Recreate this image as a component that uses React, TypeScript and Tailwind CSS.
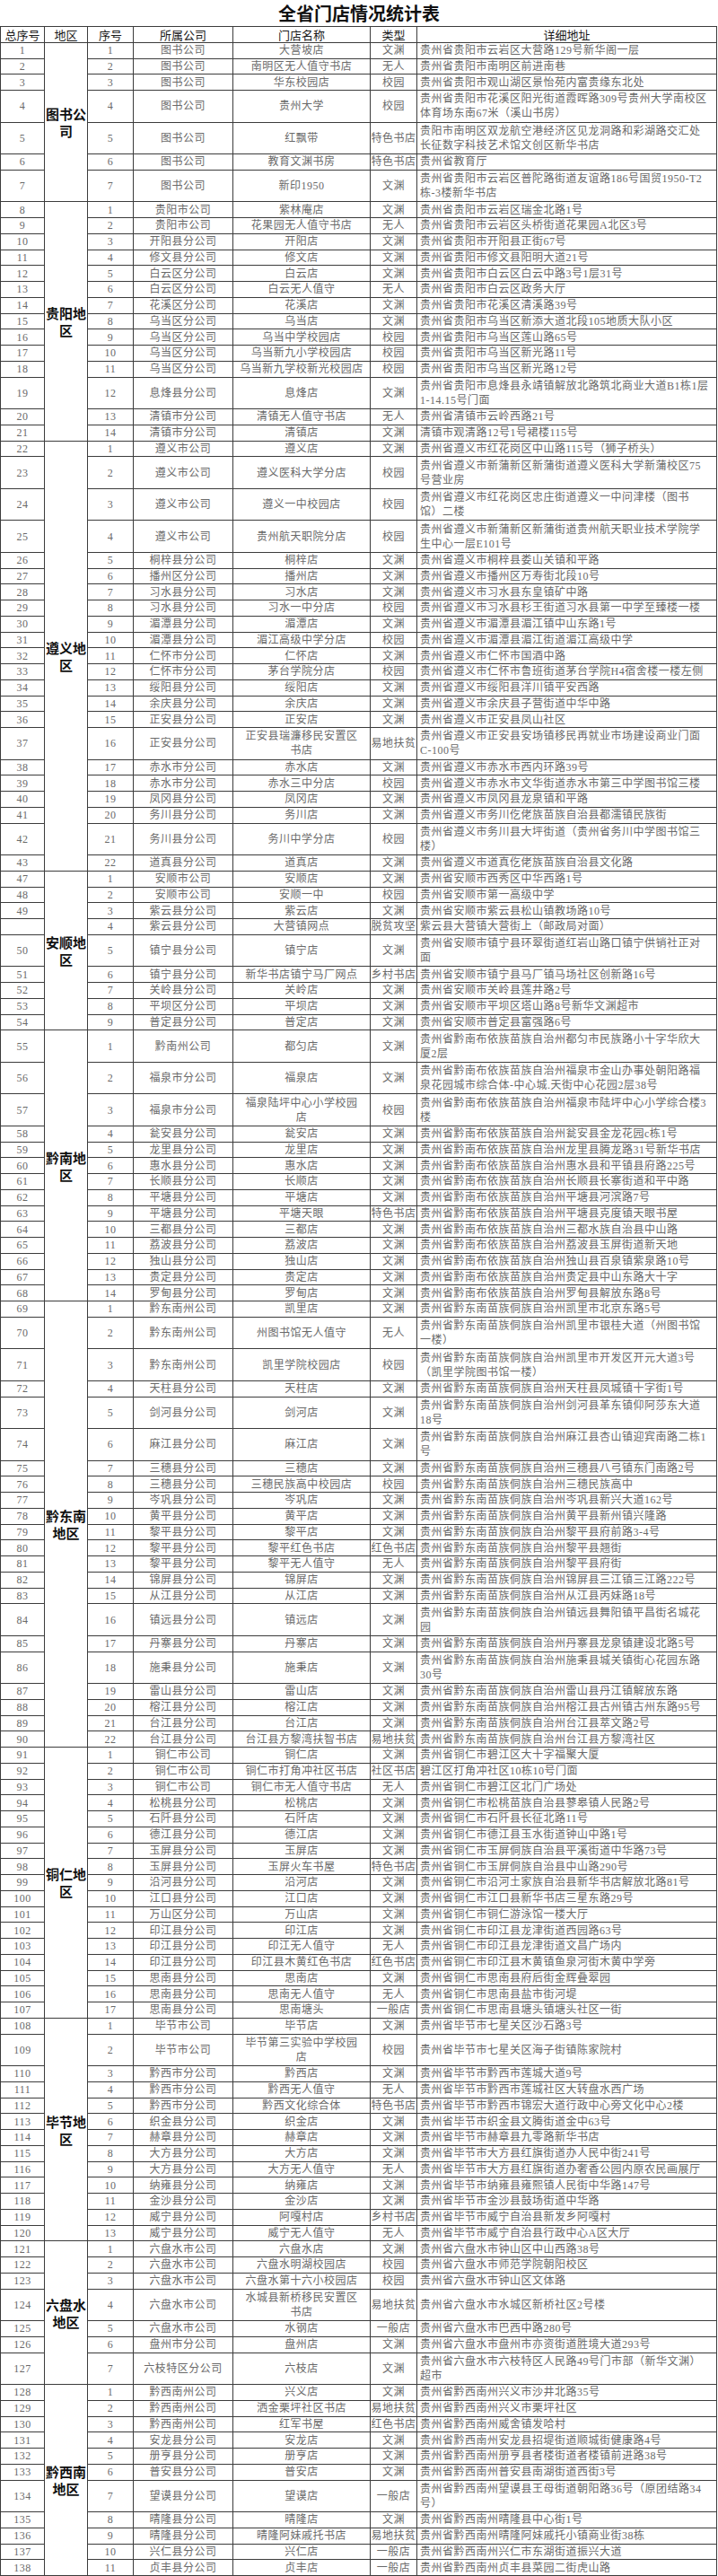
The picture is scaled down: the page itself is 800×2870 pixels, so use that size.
type Row = [string, string, string, string, string, string];

interface Region {
    name: string;
    rows: Row[];
}

const regions: Region[] = [
    {
        name: '图书公司',
        rows: [
            ['1', '1', '图书公司', '大营坡店', '文渊', '贵州省贵阳市云岩区大营路129号新华阁一层'],
            ['2', '2', '图书公司', '南明区无人值守书店', '无人', '贵州省贵阳市南明区前进南巷'],
            ['3', '3', '图书公司', '华东校园店', '校园', '贵州省贵阳市观山湖区景怡苑内富贵缘东北处'],
            ['4', '4', '图书公司', '贵州大学', '校园', '贵州省贵阳市花溪区阳光街道霞晖路309号贵州大学南校区\n体育场东南67米（溪山书房）'],
            ['5', '5', '图书公司', '红飘带', '特色书店', '贵阳市南明区双龙航空港经济区见龙洞路和彩湖路交汇处\n长征数字科技艺术馆文创区新华书店'],
            ['6', '6', '图书公司', '教育文渊书房', '特色书店', '贵州省教育厅'],
            ['7', '7', '图书公司', '新印1950', '文渊', '贵州省贵阳市云岩区普陀路街道友谊路186号国贸1950-T2\n栋-3楼新华书店'],
        ],
    },
    {
        name: '贵阳地区',
        rows: [
            ['8', '1', '贵阳市公司', '紫林庵店', '文渊', '贵州省贵阳市云岩区瑞金北路1号'],
            ['9', '2', '贵阳市公司', '花果园无人值守书店', '无人', '贵州省贵阳市云岩区头桥街道花果园A北区3号'],
            ['10', '3', '开阳县分公司', '开阳店', '文渊', '贵州省贵阳市开阳县正街67号'],
            ['11', '4', '修文县分公司', '修文店', '文渊', '贵州省贵阳市修文县阳明大道21号'],
            ['12', '5', '白云区分公司', '白云店', '文渊', '贵州省贵阳市白云区白云中路3号1层31号'],
            ['13', '6', '白云区分公司', '白云无人值守', '无人', '贵州省贵阳市白云区政务大厅'],
            ['14', '7', '花溪区分公司', '花溪店', '文渊', '贵州省贵阳市花溪区清溪路39号'],
            ['15', '8', '乌当区分公司', '乌当店', '文渊', '贵州省贵阳市乌当区新添大道北段105地质大队小区'],
            ['16', '9', '乌当区分公司', '乌当中学校园店', '校园', '贵州省贵阳市乌当区莲山路65号'],
            ['17', '10', '乌当区分公司', '乌当新九小学校园店', '校园', '贵州省贵阳市乌当区新光路11号'],
            ['18', '11', '乌当区分公司', '乌当新九学校新光校园店', '校园', '贵州省贵阳市乌当区新光路12号'],
            ['19', '12', '息烽县分公司', '息烽店', '文渊', '贵州省贵阳市息烽县永靖镇解放北路筑北商业大道B1栋1层\n1-14.15号门面'],
            ['20', '13', '清镇市分公司', '清镇无人值守书店', '无人', '贵州省清镇市云岭西路21号'],
            ['21', '14', '清镇市分公司', '清镇店', '文渊', '清镇市观清路12号1号裙楼115号'],
        ],
    },
    {
        name: '遵义地区',
        rows: [
            ['22', '1', '遵义市公司', '遵义店', '文渊', '贵州省遵义市红花岗区中山路115号（狮子桥头）'],
            ['23', '2', '遵义市公司', '遵义医科大学分店', '校园', '贵州省遵义市新蒲新区新蒲街道遵义医科大学新蒲校区75\n号营业房'],
            ['24', '3', '遵义市公司', '遵义一中校园店', '校园', '贵州省遵义市红花岗区忠庄街道遵义一中问津楼（图书\n馆）二楼'],
            ['25', '4', '遵义市公司', '贵州航天职院分店', '校园', '贵州省遵义市新蒲新区新蒲街道贵州航天职业技术学院学\n生中心一层E101号'],
            ['26', '5', '桐梓县分公司', '桐梓店', '文渊', '贵州省遵义市桐梓县娄山关镇和平路'],
            ['27', '6', '播州区分公司', '播州店', '文渊', '贵州省遵义市播州区万寿街北段10号'],
            ['28', '7', '习水县分公司', '习水店', '文渊', '贵州省遵义市习水县东皇镇矿中路'],
            ['29', '8', '习水县分公司', '习水一中分店', '校园', '贵州省遵义市习水县杉王街道习水县第一中学至臻楼一楼'],
            ['30', '9', '湄潭县分公司', '湄潭店', '文渊', '贵州省遵义市湄潭县湄江镇中山东路1号'],
            ['31', '10', '湄潭县分公司', '湄江高级中学分店', '校园', '贵州省遵义市湄潭县湄江街道湄江高级中学'],
            ['32', '11', '仁怀市分公司', '仁怀店', '文渊', '贵州省遵义市仁怀市国酒中路'],
            ['33', '12', '仁怀市分公司', '茅台学院分店', '校园', '贵州省遵义市仁怀市鲁班街道茅台学院H4宿舍楼一楼左侧'],
            ['34', '13', '绥阳县分公司', '绥阳店', '文渊', '贵州省遵义市绥阳县洋川镇平安西路'],
            ['35', '14', '余庆县分公司', '余庆店', '文渊', '贵州省遵义市余庆县子营街道中华中路'],
            ['36', '15', '正安县分公司', '正安店', '文渊', '贵州省遵义市正安县凤山社区'],
            ['37', '16', '正安县分公司', '正安县瑞濂移民安置区\n书店', '易地扶贫', '贵州省遵义市正安县安场镇移民再就业市场建设商业门面\nC-100号'],
            ['38', '17', '赤水市分公司', '赤水店', '文渊', '贵州省遵义市赤水市西内环路39号'],
            ['39', '18', '赤水市分公司', '赤水三中分店', '校园', '贵州省遵义市赤水市文华街道赤水市第三中学图书馆三楼'],
            ['40', '19', '凤冈县分公司', '凤冈店', '文渊', '贵州省遵义市凤冈县龙泉镇和平路'],
            ['41', '20', '务川县分公司', '务川店', '文渊', '贵州省遵义市务川仡佬族苗族自治县都濡镇民族街'],
            ['42', '21', '务川县分公司', '务川中学分店', '校园', '贵州省遵义市务川县大坪街道（贵州省务川中学图书馆三\n楼）'],
            ['43', '22', '道真县分公司', '道真店', '文渊', '贵州省遵义市道真仡佬族苗族自治县文化路'],
        ],
    },
    {
        name: '安顺地区',
        rows: [
            ['47', '1', '安顺市公司', '安顺店', '文渊', '贵州省安顺市西秀区中华西路1号'],
            ['48', '2', '安顺市公司', '安顺一中', '校园', '贵州省安顺市第一高级中学'],
            ['49', '3', '紫云县分公司', '紫云店', '文渊', '贵州省安顺市紫云县松山镇教场路10号'],
            ['', '4', '紫云县分公司', '大营镇网点', '脱贫攻坚', '紫云县大营镇大营街上（邮政局对面）'],
            ['50', '5', '镇宁县分公司', '镇宁店', '文渊', '贵州省安顺市镇宁县环翠街道红岩山路口镇宁供销社正对\n面'],
            ['51', '6', '镇宁县分公司', '新华书店镇宁马厂网点', '乡村书店', '贵州省安顺市镇宁县马厂镇马场社区创新路16号'],
            ['52', '7', '关岭县分公司', '关岭店', '文渊', '贵州省安顺市关岭县莲井路2号'],
            ['53', '8', '平坝区分公司', '平坝店', '文渊', '贵州省安顺市平坝区塔山路8号新华文渊超市'],
            ['54', '9', '普定县分公司', '普定店', '文渊', '贵州省安顺市普定县富强路6号'],
        ],
    },
    {
        name: '黔南地区',
        rows: [
            ['55', '1', '黔南州公司', '都匀店', '文渊', '贵州省黔南布依族苗族自治州都匀市民族路小十字华欣大\n厦2层'],
            ['56', '2', '福泉市分公司', '福泉店', '文渊', '贵州省黔南布依族苗族自治州福泉市金山办事处朝阳路福\n泉花园城市综合体-中心城.天街中心花园2层38号'],
            ['57', '3', '福泉市分公司', '福泉陆坪中心小学校园\n店', '校园', '贵州省黔南布依族苗族自治州福泉市陆坪中心小学综合楼3\n楼'],
            ['58', '4', '瓮安县分公司', '瓮安店', '文渊', '贵州省黔南布依族苗族自治州瓮安县金龙花园c栋1号'],
            ['59', '5', '龙里县分公司', '龙里店', '文渊', '贵州省黔南布依族苗族自治州龙里县腾龙路31号新华书店'],
            ['60', '6', '惠水县分公司', '惠水店', '文渊', '贵州省黔南布依族苗族自治州惠水县和平镇县府路225号'],
            ['61', '7', '长顺县分公司', '长顺店', '文渊', '贵州省黔南布依族苗族自治州长顺县长寨街道和平中路'],
            ['62', '8', '平塘县分公司', '平塘店', '文渊', '贵州省黔南布依族苗族自治州平塘县河滨路7号'],
            ['63', '9', '平塘县分公司', '平塘天眼', '特色书店', '贵州省黔南布依族苗族自治州平塘县克度镇天眼书屋'],
            ['64', '10', '三都县分公司', '三都店', '文渊', '贵州省黔南布依族苗族自治州三都水族自治县中山路'],
            ['65', '11', '荔波县分公司', '荔波店', '文渊', '贵州省黔南布依族苗族自治州荔波县玉屏街道新天地'],
            ['66', '12', '独山县分公司', '独山店', '文渊', '贵州省黔南布依族苗族自治州独山县百泉镇紫泉路10号'],
            ['67', '13', '贵定县分公司', '贵定店', '文渊', '贵州省黔南布依族苗族自治州贵定县中山东路大十字'],
            ['68', '14', '罗甸县分公司', '罗甸店', '文渊', '贵州省黔南布依族苗族自治州罗甸县解放东路8号'],
        ],
    },
    {
        name: '黔东南地区',
        rows: [
            ['69', '1', '黔东南州公司', '凯里店', '文渊', '贵州省黔东南苗族侗族自治州凯里市北京东路5号'],
            ['70', '2', '黔东南州公司', '州图书馆无人值守', '无人', '贵州省黔东南苗族侗族自治州凯里市银桂大道（州图书馆\n一楼）'],
            ['71', '3', '黔东南州公司', '凯里学院校园店', '校园', '贵州省黔东南苗族侗族自治州凯里市开发区开元大道3号\n（凯里学院图书馆一楼）'],
            ['72', '4', '天柱县分公司', '天柱店', '文渊', '贵州省黔东南苗族侗族自治州天柱县凤城镇十字街1号'],
            ['73', '5', '剑河县分公司', '剑河店', '文渊', '贵州省黔东南苗族侗族自治州剑河县革东镇仰阿莎东大道\n18号'],
            ['74', '6', '麻江县分公司', '麻江店', '文渊', '贵州省黔东南苗族侗族自治州麻江县杏山镇迎宾南路二栋1\n号'],
            ['75', '7', '三穗县分公司', '三穗店', '文渊', '贵州省黔东南苗族侗族自治州三穗县八弓镇东门南路2号'],
            ['76', '8', '三穗县分公司', '三穗民族高中校园店', '校园', '贵州省黔东南苗族侗族自治州三穗民族高中'],
            ['77', '9', '岑巩县分公司', '岑巩店', '文渊', '贵州省黔东南苗族侗族自治州岑巩县新兴大道162号'],
            ['78', '10', '黄平县分公司', '黄平店', '文渊', '贵州省黔东南苗族侗族自治州黄平县新州镇兴隆路'],
            ['79', '11', '黎平县分公司', '黎平店', '文渊', '贵州省黔东南苗族侗族自治州黎平县府前路3-4号'],
            ['80', '12', '黎平县分公司', '黎平红色书店', '红色书店', '贵州省黔东南苗族侗族自治州黎平县翘街'],
            ['81', '13', '黎平县分公司', '黎平无人值守', '无人', '贵州省黔东南苗族侗族自治州黎平县府街'],
            ['82', '14', '锦屏县分公司', '锦屏店', '文渊', '贵州省黔东南苗族侗族自治州锦屏县三江镇三江路222号'],
            ['83', '15', '从江县分公司', '从江店', '文渊', '贵州省黔东南苗族侗族自治州从江县丙妹路18号'],
            ['84', '16', '镇远县分公司', '镇远店', '文渊', '贵州省黔东南苗族侗族自治州镇远县舞阳镇平昌街名城花\n园'],
            ['85', '17', '丹寨县分公司', '丹寨店', '文渊', '贵州省黔东南苗族侗族自治州丹寨县龙泉镇建设北路5号'],
            ['86', '18', '施秉县分公司', '施秉店', '文渊', '贵州省黔东南苗族侗族自治州施秉县城关镇街心花园东路\n30号'],
            ['87', '19', '雷山县分公司', '雷山店', '文渊', '贵州省黔东南苗族侗族自治州雷山县丹江镇解放东路'],
            ['88', '20', '榕江县分公司', '榕江店', '文渊', '贵州省黔东南苗族侗族自治州榕江县古州镇古州东路95号'],
            ['89', '21', '台江县分公司', '台江店', '文渊', '贵州省黔东南苗族侗族自治州台江县萃文路2号'],
            ['90', '22', '台江县分公司', '台江县方黎湾扶智书店', '易地扶贫', '贵州省黔东南苗族侗族自治州台江县方黎湾社区'],
        ],
    },
    {
        name: '铜仁地区',
        rows: [
            ['91', '1', '铜仁市公司', '铜仁店', '文渊', '贵州省铜仁市碧江区大十字福聚大厦'],
            ['92', '2', '铜仁市公司', '铜仁市打角冲社区书店', '社区书店', '碧江区打角冲社区10栋10号门面'],
            ['93', '3', '铜仁市公司', '铜仁市无人值守书店', '无人', '贵州省铜仁市碧江区北门广场处'],
            ['94', '4', '松桃县分公司', '松桃店', '文渊', '贵州省铜仁市松桃苗族自治县蓼皋镇人民路2号'],
            ['95', '5', '石阡县分公司', '石阡店', '文渊', '贵州省铜仁市石阡县长征北路11号'],
            ['96', '6', '德江县分公司', '德江店', '文渊', '贵州省铜仁市德江县玉水街道钟山中路1号'],
            ['97', '7', '玉屏县分公司', '玉屏店', '文渊', '贵州省铜仁市玉屏侗族自治县平溪街道中华路73号'],
            ['98', '8', '玉屏县分公司', '玉屏火车书屋', '特色书店', '贵州省铜仁市玉屏侗族自治县中山路290号'],
            ['99', '9', '沿河县分公司', '沿河店', '文渊', '贵州省铜仁市沿河土家族自治县新华书店解放北路81号'],
            ['100', '10', '江口县分公司', '江口店', '文渊', '贵州省铜仁市江口县新华书店三星东路29号'],
            ['101', '11', '万山区分公司', '万山店', '文渊', '贵州省铜仁市铜仁游泳馆一楼大厅'],
            ['102', '12', '印江县分公司', '印江店', '文渊', '贵州省铜仁市印江县龙津街道西园路63号'],
            ['103', '13', '印江县分公司', '印江无人值守', '无人', '贵州省铜仁市印江县龙津街道文昌广场内'],
            ['104', '14', '印江县分公司', '印江县木黄红色书店', '红色书店', '贵州省铜仁市印江县木黄镇鱼泉河街木黄中学旁'],
            ['105', '15', '思南县分公司', '思南店', '文渊', '贵州省铜仁市思南县府后街金辉叠翠园'],
            ['106', '16', '思南县分公司', '思南无人值守', '无人', '贵州省铜仁市思南县盐市街河堤'],
            ['107', '17', '思南县分公司', '思南塘头', '一般店', '贵州省铜仁市思南县塘头镇塘头社区一街'],
        ],
    },
    {
        name: '毕节地区',
        rows: [
            ['108', '1', '毕节市公司', '毕节店', '文渊', '贵州省毕节市七星关区沙石路3号'],
            ['109', '2', '毕节市公司', '毕节第三实验中学校园\n店', '校园', '贵州省毕节市七星关区海子街镇陈家院村'],
            ['110', '3', '黔西市分公司', '黔西店', '文渊', '贵州省毕节市黔西市莲城大道9号'],
            ['111', '4', '黔西市分公司', '黔西无人值守', '无人', '贵州省毕节市黔西市莲城社区大转盘水西广场'],
            ['112', '5', '黔西市分公司', '黔西文化综合体', '特色书店', '贵州省毕节市黔西市锦宏大道行政中心旁文化中心2楼'],
            ['113', '6', '织金县分公司', '织金店', '文渊', '贵州省毕节市织金县文腾街道金中63号'],
            ['114', '7', '赫章县分公司', '赫章店', '文渊', '贵州省毕节市赫章县九零路新华书店'],
            ['115', '8', '大方县分公司', '大方店', '文渊', '贵州省毕节市大方县红旗街道办人民中街241号'],
            ['116', '9', '大方县分公司', '大方无人值守', '无人', '贵州省毕节市大方县红旗街道办奢香公园内原农民画展厅'],
            ['117', '10', '纳雍县分公司', '纳雍店', '文渊', '贵州省毕节市纳雍县雍熙镇人民街中华路147号'],
            ['118', '11', '金沙县分公司', '金沙店', '文渊', '贵州省毕节市金沙县鼓场街道中华路'],
            ['119', '12', '威宁县分公司', '阿嘎村店', '乡村书店', '贵州省毕节市威宁自治县新发乡阿嘎村'],
            ['120', '13', '威宁县分公司', '威宁无人值守', '无人', '贵州省毕节市威宁自治县行政中心A区大厅'],
        ],
    },
    {
        name: '六盘水地区',
        rows: [
            ['121', '1', '六盘水市公司', '六盘水店', '文渊', '贵州省六盘水市钟山区中山西路38号'],
            ['122', '2', '六盘水市公司', '六盘水明湖校园店', '校园', '贵州省六盘水市师范学院朝阳校区'],
            ['123', '3', '六盘水市公司', '六盘水第十六小校园店', '校园', '贵州省六盘水市钟山区文体路'],
            ['124', '4', '六盘水市公司', '水城县新桥移民安置区\n书店', '易地扶贫', '贵州省六盘水市水城区新桥社区2号楼'],
            ['125', '5', '六盘水市公司', '水钢店', '一般店', '贵州省六盘水市巴西中路280号'],
            ['126', '6', '盘州市分公司', '盘州店', '文渊', '贵州省六盘水市盘州市亦资街道胜境大道293号'],
            ['127', '7', '六枝特区分公司', '六枝店', '文渊', '贵州省六盘水市六枝特区人民路49号门市部（新华文渊）\n超市'],
        ],
    },
    {
        name: '黔西南地区',
        rows: [
            ['128', '1', '黔西南州公司', '兴义店', '文渊', '贵州省黔西南州兴义市沙井北路35号'],
            ['129', '2', '黔西南州公司', '洒金栗坪社区书店', '易地扶贫', '贵州省黔西南州兴义市栗坪社区'],
            ['130', '3', '黔西南州公司', '红军书屋', '红色书店', '贵州省黔西南州威舍镇发哈村'],
            ['131', '4', '安龙县分公司', '安龙店', '文渊', '贵州省黔西南州安龙县招堤街道顺城街健康路4号'],
            ['132', '5', '册亨县分公司', '册亨店', '文渊', '贵州省黔西南州册亨县者楼街道者楼镇前进路38号'],
            ['133', '6', '普安县分公司', '普安店', '文渊', '贵州省黔西南州普安县南湖街道西街3号'],
            ['134', '7', '望谟县分公司', '望谟店', '一般店', '贵州省黔西南州望谟县王母街道朝阳路36号（原团结路34\n号）'],
            ['135', '8', '晴隆县分公司', '晴隆店', '文渊', '贵州省黔西南州晴隆县中心街1号'],
            ['136', '9', '晴隆县分公司', '晴隆阿妹戚托书店', '易地扶贫', '贵州省黔西南州晴隆阿妹戚托小镇商业街38栋'],
            ['137', '10', '兴仁县分公司', '兴仁店', '一般店', '贵州省黔西南州兴仁市东湖街道振兴大道'],
            ['138', '11', '贞丰县分公司', '贞丰店', '一般店', '贵州省黔西南州贞丰县菜园二街虎山路'],
        ],
    },
];

const headers = ['总序号', '地区', '序号', '所属公司', '门店名称', '类型', '详细地址'];

const td = 'border border-[#3c3c3c] p-0 align-middle';

function Cell({ text, tall, left }: { text: string; tall: boolean; left?: boolean }) {
    return (
        <td className={td}>
            <div
                className={`${tall ? 'h-[34.5px]' : 'h-[16.75px]'} flex items-center overflow-hidden whitespace-pre ${
                    left ? 'justify-start text-left pl-[3px]' : 'justify-center text-center'
                }`}
            >
                {text}
            </div>
        </td>
    );
}

export default function App() {
    return (
        <div className="w-[800px] bg-white font-['Liberation_Serif','Noto_Sans_CJK_SC',serif]">
            {/* Title */}
            <div className="h-[29px] flex items-center justify-center text-[20px] font-bold text-[#111] font-['Noto_Sans_CJK_SC',sans-serif] leading-none">
                全省门店情况统计表
            </div>

            <table className="w-[799px] table-fixed border-collapse">
                <colgroup>
                    <col className="w-[49px]" />
                    <col className="w-[48px]" />
                    <col className="w-[51px]" />
                    <col className="w-[111px]" />
                    <col className="w-[153px]" />
                    <col className="w-[52px]" />
                    <col />
                </colgroup>
                <thead>
                    <tr>
                        {headers.map((h) => (
                            <th key={h} className={`${td} font-normal`}>
                                <div className="h-[16.75px] flex items-center justify-center overflow-hidden text-[13px] leading-[15px] text-[#1a1a1a] font-['Noto_Sans_CJK_SC',sans-serif]">
                                    {h}
                                </div>
                            </th>
                        ))}
                    </tr>
                </thead>
                <tbody className="text-[12px] tracking-[0.5px] text-[#6a6a6a] leading-[16px]">
                    {regions.map((region) =>
                        region.rows.map((row, i) => {
                            const [total, seq, company, name, type, address] = row;
                            const tall = name.includes('\n') || address.includes('\n');
                            return (
                                <tr key={`${region.name}-${seq}`}>
                                    <Cell text={total} tall={tall} />
                                    {i === 0 && (
                                        <td
                                            rowSpan={region.rows.length}
                                            className="border border-[#3c3c3c] p-0 text-center align-middle text-[15px] leading-[19px] font-bold tracking-normal text-[#111] font-['Noto_Sans_CJK_SC',sans-serif] break-all"
                                        >
                                            {region.name}
                                        </td>
                                    )}
                                    <Cell text={seq} tall={tall} />
                                    <Cell text={company} tall={tall} />
                                    <Cell text={name} tall={tall} />
                                    <Cell text={type} tall={tall} />
                                    <Cell text={address} tall={tall} left />
                                </tr>
                            );
                        })
                    )}
                </tbody>
            </table>
        </div>
    );
}
